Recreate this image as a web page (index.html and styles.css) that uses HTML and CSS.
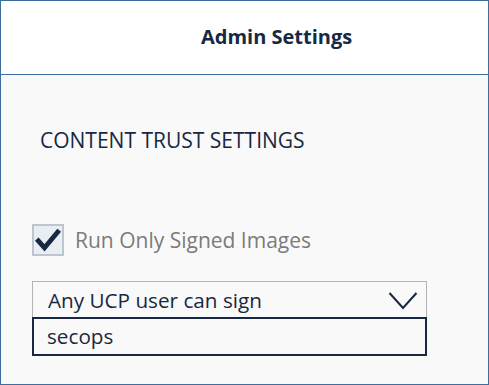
FILE: index.html
```html
<!DOCTYPE html>
<html>
<head>
<meta charset="utf-8">
<link rel="stylesheet" href="styles.css">
</head>
<body>
<div class="frame">
  <header class="header">
    <h1 class="title">Admin Settings</h1>
  </header>
  <main class="content">
    <h2 class="section">CONTENT TRUST SETTINGS</h2>
    <label class="check-row">
      <span class="checkbox">
        <svg viewBox="0 0 32 32" width="30" height="30"><path d="M5 17 L12 25 L27 7" fill="none" stroke="#172842" stroke-width="5.5" stroke-linecap="square" stroke-linejoin="miter"/></svg>
      </span>
      <span class="check-label">Run Only Signed Images</span>
    </label>
    <div class="select">
      <div class="select-head">
        <span class="select-value">Any UCP user can sign</span>
        <svg class="chevron" viewBox="0 0 30 18" width="30" height="18"><path d="M1.5 1 L15 16 L28.5 1" fill="none" stroke="#172842" stroke-width="2"/></svg>
      </div>
      <div class="select-option">secops</div>
    </div>
  </main>
</div>
</body>
</html>
```
FILE: styles.css
```css
html, body {
  margin: 0;
  padding: 0;
}
body {
  font-family: "Open Sans", "Liberation Sans", sans-serif;
  color: #172842;
}
.frame {
  width: 489px;
  height: 385px;
  box-sizing: border-box;
  border: 1px solid #3c6d9e;
  background: #f9f9f9;
  display: flex;
  flex-direction: column;
}
.header {
  height: 74px;
  background: #fff;
  border-bottom: 1px solid #3c6d9e;
  padding-left: 200px;
  padding-top: 24px;
  box-sizing: border-box;
  flex: none;
}
.title {
  margin: 0;
  font-size: 20px;
  line-height: 24px;
  font-weight: 700;
  color: #172842;
}
.content {
  padding: 53px 0 0 31px;
}
.section {
  margin: 0 0 0 8px;
  font-size: 21px;
  line-height: 24px;
  font-weight: 400;
  color: #172842;
}
.check-row {
  display: flex;
  align-items: center;
  margin-top: 72px;
  gap: 11px;
}
.checkbox {
  width: 32px;
  height: 32px;
  box-sizing: border-box;
  border: 2px solid #bcc6ce;
  background: #e9eef3;
  display: flex;
  align-items: center;
  justify-content: center;
}
.checkbox svg {
  display: block;
}
.check-label {
  font-size: 21px;
  line-height: 24px;
  color: #7b7b7b;
}
.select {
  margin-top: 25px;
  width: 395px;
}
.select-head {
  height: 36px;
  box-sizing: border-box;
  border: 1px solid #b3b3b3;
  border-bottom: none;
  display: flex;
  align-items: center;
  justify-content: space-between;
  padding: 0 8px 0 15px;
}
.select-value {
  font-size: 20.7px;
  line-height: 24px;
  color: #172842;
}
.chevron {
  display: block;
  margin-top: 2px;
}
.select-option {
  height: 39px;
  box-sizing: border-box;
  border: 2px solid #172842;
  padding-left: 13px;
  font-size: 20.7px;
  line-height: 34px;
  color: #172842;
}
```
